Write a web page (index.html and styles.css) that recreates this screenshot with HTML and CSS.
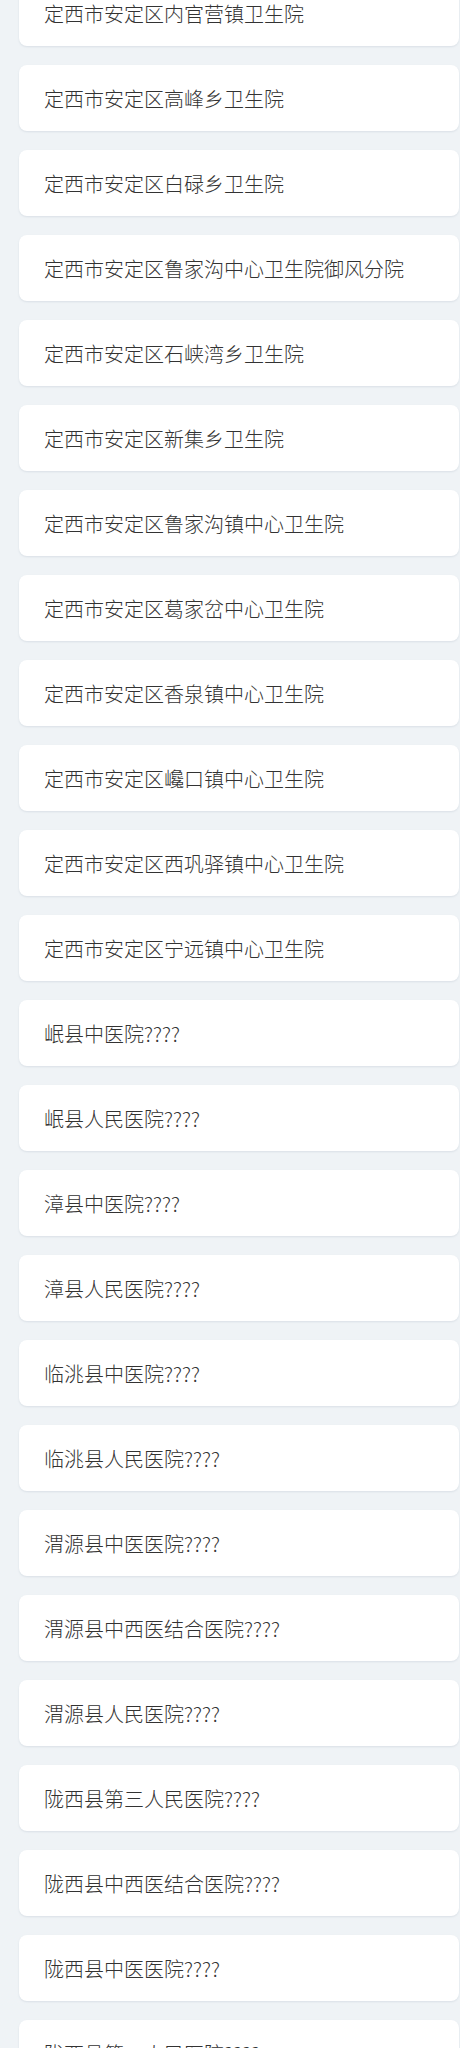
FILE: index.html
```html
<!DOCTYPE html>
<html lang="zh-CN">
<head>
<meta charset="utf-8">
<link rel="stylesheet" href="styles.css">
</head>
<body>
<ul class="list">
  <li class="card">定西市安定区内官营镇卫生院</li>
  <li class="card">定西市安定区高峰乡卫生院</li>
  <li class="card">定西市安定区白碌乡卫生院</li>
  <li class="card">定西市安定区鲁家沟中心卫生院御风分院</li>
  <li class="card">定西市安定区石峡湾乡卫生院</li>
  <li class="card">定西市安定区新集乡卫生院</li>
  <li class="card">定西市安定区鲁家沟镇中心卫生院</li>
  <li class="card">定西市安定区葛家岔中心卫生院</li>
  <li class="card">定西市安定区香泉镇中心卫生院</li>
  <li class="card">定西市安定区巉口镇中心卫生院</li>
  <li class="card">定西市安定区西巩驿镇中心卫生院</li>
  <li class="card">定西市安定区宁远镇中心卫生院</li>
  <li class="card">岷县中医院????</li>
  <li class="card">岷县人民医院????</li>
  <li class="card">漳县中医院????</li>
  <li class="card">漳县人民医院????</li>
  <li class="card">临洮县中医院????</li>
  <li class="card">临洮县人民医院????</li>
  <li class="card">渭源县中医医院????</li>
  <li class="card">渭源县中西医结合医院????</li>
  <li class="card">渭源县人民医院????</li>
  <li class="card">陇西县第三人民医院????</li>
  <li class="card">陇西县中西医结合医院????</li>
  <li class="card">陇西县中医医院????</li>
  <li class="card">陇西县第二人民医院????</li>
</ul>
</body>
</html>
```
FILE: styles.css
```css
html, body {
  margin: 0;
  padding: 0;
  background: #eff3f6;
}
body {
  font-family: "Noto Sans CJK SC", "Noto Sans", sans-serif;
  font-weight: 300;
  color: #333333;
}
.list {
  list-style: none;
  margin: -20px 0 0 0;
  padding: 0 1px 0 19px;
  display: flex;
  flex-direction: column;
  gap: 19px;
}
.card {
  height: 66px;
  box-sizing: border-box;
  display: flex;
  align-items: center;
  padding: 2px 0 0 25px;
  background: #ffffff;
  border-radius: 8px;
  box-shadow: 0 1px 2px rgba(120, 140, 160, 0.18);
  font-size: 20px;
  line-height: 1;
  white-space: nowrap;
}
```
